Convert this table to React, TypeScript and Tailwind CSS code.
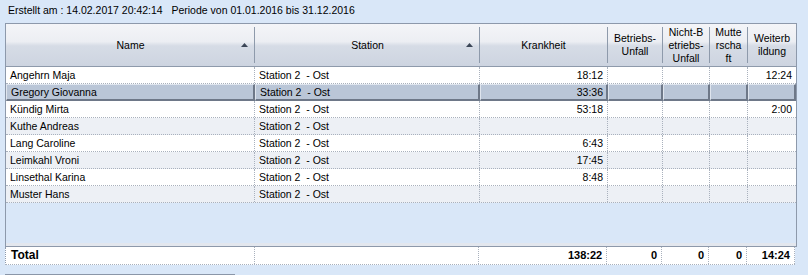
const cols = [
  { w: 'w-[249px]', label: ['Name'], sort: true },
  { w: 'w-[225px]', label: ['Station'], sort: true },
  { w: 'w-[128px]', label: ['Krankheit'] },
  { w: 'w-[55px]', label: ['Betriebs-', 'Unfall'] },
  { w: 'w-[47px]', label: ['Nicht-B', 'etriebs-', 'Unfall'] },
  { w: 'w-[38px]', label: ['Mutte', 'rscha', 'ft'] },
  { w: 'w-[48px]', label: ['Weiterb', 'ildung'] },
]

const rows = [
  { name: 'Angehrn Maja', krank: '18:12', weiter: '12:24' },
  { name: 'Gregory Giovanna', krank: '33:36', weiter: '', selected: true },
  { name: 'Kündig Mirta', krank: '53:18', weiter: '2:00' },
  { name: 'Kuthe Andreas', krank: '', weiter: '' },
  { name: 'Lang Caroline', krank: '6:43', weiter: '' },
  { name: 'Leimkahl Vroni', krank: '17:45', weiter: '' },
  { name: 'Linsethal Karina', krank: '8:48', weiter: '' },
  { name: 'Muster Hans', krank: '', weiter: '' },
]

function SortArrow() {
  return (
    <svg width="7" height="4" viewBox="0 0 7 4" className="shrink-0">
      <polygon points="3.5,0 7,4 0,4" fill="#3b4657" />
    </svg>
  )
}

function HeaderCell({ col, last }: { col: (typeof cols)[number]; last: boolean }) {
  return (
    <div className={`${col.w} h-full py-[3px]`}>
      <div
        className={`flex h-full items-center ${last ? '' : 'border-r border-[#8e9aab]'} ${
          col.sort ? 'pr-[6px]' : ''
        }`}
      >
        <div className={`flex-1 text-center leading-[13px] ${col.sort ? 'pl-[14px]' : ''}`}>
          {col.label.map((l) => (
            <div key={l}>{l}</div>
          ))}
        </div>
        {col.sort && <SortArrow />}
      </div>
    </div>
  )
}

function Row({ r, i }: { r: (typeof rows)[number]; i: number }) {
  const values = [r.name, 'Station 2  - Ost', r.krank, '', '', '', r.weiter]
  if (r.selected) {
    return (
      <div className="flex h-[17px] bg-[#bac6d7]">
        {values.map((v, c) => (
          <div
            key={c}
            className={`${cols[c].w} h-full border-t border-l border-t-[#dfe5ee] border-l-[#dfe5ee] border-r-2 border-b-2 border-r-[#6e7888] border-b-[#6e7888] ${
              c < 2 ? 'pl-[4px] text-left' : 'pr-[3px] text-right'
            } whitespace-pre leading-[15px]`}
          >
            {v}
          </div>
        ))}
      </div>
    )
  }
  return (
    <div className={`flex h-[17px] border-b border-dotted border-[#a9b1bd] ${i % 2 ? 'bg-[#edf0f5]' : 'bg-white'}`}>
      {values.map((v, c) => (
        <div
          key={c}
          className={`${cols[c].w} h-full ${c < 6 ? 'border-r border-dotted border-[#a9b1bd]' : ''} ${
            c < 2 ? 'pl-[4px] text-left' : 'pr-[4px] text-right'
          } whitespace-pre leading-[16px]`}
        >
          {v}
        </div>
      ))}
    </div>
  )
}

export default function App() {
  const totals = ['Total', '', '138:22', '0', '0', '0', '14:24']
  return (
    <div className="h-[275px] w-[808px] overflow-hidden bg-[#d9e7f8] font-['Liberation_Sans',Arial,sans-serif] text-[10.5px] text-black">
      <div className="flex h-[23px] items-center pl-[8px] pb-[1px] whitespace-pre">
        Erstellt am : 14.02.2017 20:42:14   Periode von 01.01.2016 bis 31.12.2016
      </div>
      <div className="ml-[5px] w-[792px] border border-[#8d99ab]">
        <div className="flex h-[43px] border-b border-[#8e9aab] bg-[linear-gradient(to_bottom,#f4f5f8_0%,#eceef3_42%,#d6dce6_52%,#cdd4e0_100%)]">
          {cols.map((c, i) => (
            <HeaderCell key={i} col={c} last={i === cols.length - 1} />
          ))}
        </div>
        {rows.map((r, i) => (
          <Row key={r.name} r={r} i={i} />
        ))}
        <div className="h-[40px]" />
        <div className="h-[3px] bg-[#e3e7ee]" />
      </div>
      <div className="ml-[5px] flex h-[18px] w-[790px] border-l border-b border-[#8d99ab] border-b-[#a9b1bd] border-dotted bg-white font-bold">
        {totals.map((v, c) => (
          <div
            key={c}
            className={`${cols[c].w} h-full border-r border-dotted border-[#a9b1bd] ${
              c === 0 ? 'w-[248px] pl-[5px] text-left text-[12px]' : 'pr-[4px] text-right text-[11px]'
            } leading-[17px]`}
          >
            {v}
          </div>
        ))}
      </div>
      <div className="mt-[9px] ml-[5px] h-[2px] w-[230px] bg-[#8a96a8]" />
    </div>
  )
}
